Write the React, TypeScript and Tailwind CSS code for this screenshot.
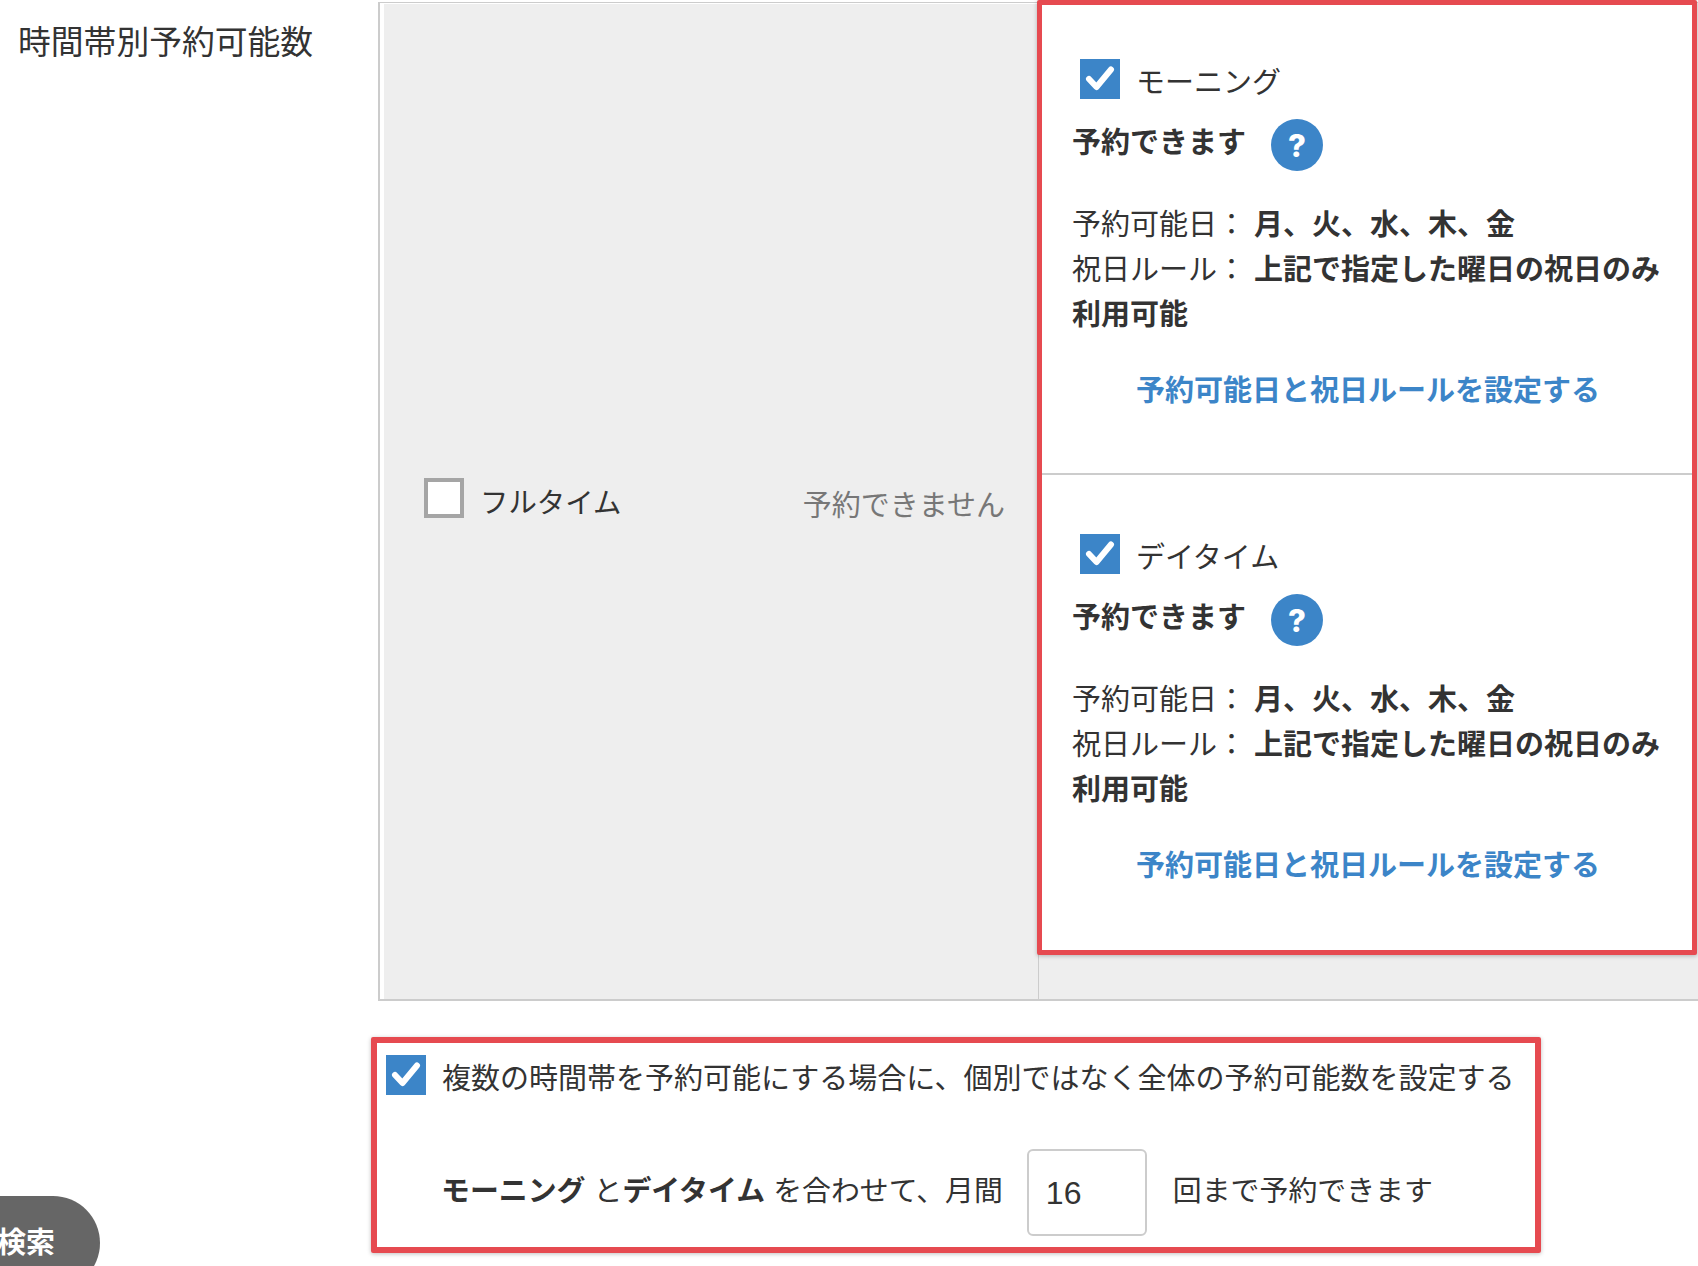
const font = "font-['Helvetica_Neue','Liberation_Sans','Noto_Sans_CJK_JP',sans-serif]";

const CheckBox = ({ checked = false }: { checked?: boolean }) =>
  checked ? (
    <span className="block h-10 w-10 shrink-0 bg-[#3c85c8]">
      <svg viewBox="0 0 40 40" className="h-10 w-10">
        <path d="M9 20l7.5 8L31 10.5" fill="none" stroke="#fff" strokeWidth="6" strokeLinecap="round" strokeLinejoin="round" />
      </svg>
    </span>
  ) : (
    <span className="block h-10 w-10 shrink-0 border-4 border-[#a5a5a5] bg-white" />
  );

const Plan = ({ name, className }: { name: string; className: string }) => (
  <div className={className}>
    {/* CHECK + NAME */}
    <label className="ml-[8px] flex h-10 items-center gap-[16px]">
      <CheckBox checked />
      <span className="mt-[7px]">{name}</span>
    </label>

    {/* STATUS */}
    <div className="mt-5 flex items-start">
      <span className="mt-[4px] font-bold">予約できます</span>
      <span className="ml-[25px] flex h-[52px] w-[52px] items-center justify-center rounded-full bg-[#3c85c8] font-['Inter'] text-[31px] font-extrabold leading-none text-white">
        ?
      </span>
    </div>

    {/* RULES */}
    <div className="mt-[32px] leading-[45px]">
      <p>
        予約可能日： <b>月、火、水、木、金</b>
      </p>
      <p>
        祝日ルール： <b>上記で指定した曜日の祝日のみ利用可能</b>
      </p>
    </div>

    <p className="mt-[33px] pr-[8px] text-center font-bold text-[#3c85c8]">予約可能日と祝日ルールを設定する</p>
  </div>
);

export default function App() {
  return (
    <div className={`${font} relative flex h-[1266px] w-[1698px] overflow-hidden bg-white text-[29px] leading-[40px] text-[#333]`}>
      {/* LABEL COLUMN */}
      <div className="w-[378px] shrink-0 pl-[18px] pt-[22px] text-[32.8px] leading-[42px]">時間帯別予約可能数</div>

      {/* MAIN COLUMN */}
      <div className="flex-1 pt-[2px]">
        <div className="grid h-[999px] grid-cols-[658px_1fr] border-t border-b-2 border-l-2 border-[#ccc] bg-[#eee]">
          {/* FULL TIME */}
          <div className="flex items-center justify-between border-l-4 border-t border-white pl-[40px] pr-[33px]">
            <label className="mb-[7px] flex items-center gap-[16px]">
              <CheckBox />
              <span className="mt-[10px] text-[28.4px]">フルタイム</span>
            </label>
            <span className="mt-[8px] text-[#777]">予約できません</span>
          </div>

          {/* MORNING / DAYTIME */}
          <div className="border-l border-[#ccc]">
            <div className="-ml-[2px] -mt-[3px] mr-[1px] rounded-[2px] border-[5.5px] border-[#e64a50] bg-white pl-[30px] pr-[20px] shadow-[0_1px_4px_rgba(0,0,0,0.25)]">
              <Plan name="モーニング" className="-ml-[30px] -mr-[20px] h-[470px] border-b-2 border-[#ccc] pl-[30px] pr-[20px] pt-[54px]" />
              <Plan name="デイタイム" className="h-[475px] pt-[59px]" />
            </div>
          </div>
        </div>

        {/* TOTAL LIMIT */}
        <div className="-ml-[7px] mt-[36px] h-[216px] w-[1170px] rounded-[2px] border-[6px] border-[#e64a50] pl-[9px] pt-[12px] shadow-[0_1px_4px_rgba(0,0,0,0.25)]">
          <label className="flex items-start gap-[16px]">
            <CheckBox checked />
            <span className="mt-[4px] whitespace-nowrap">複数の時間帯を予約可能にする場合に、個別ではなく全体の予約可能数を設定する</span>
          </label>
          <div className="ml-[55px] mt-[46px] flex items-center text-[28.9px]">
            <span>
              <b>モーニング</b> と<b>デイタイム</b> を合わせて、月間
            </span>
            <input
              readOnly
              value="16"
              className="ml-[24px] mr-[26px] mt-[4px] h-[87px] w-[120px] rounded-[6px] border-2 border-[#ccc] bg-white pl-[17px] pt-[2px] text-[32px] text-[#333] outline-none"
            />
            <span>回まで予約できます</span>
          </div>
        </div>
      </div>

      {/* SEARCH BUTTON */}
      <button className="absolute left-[-60px] top-[1196px] h-[94px] w-[160px] rounded-[47px] bg-[#666] pl-[57px] text-left font-bold text-white">
        検索
      </button>
    </div>
  );
}
